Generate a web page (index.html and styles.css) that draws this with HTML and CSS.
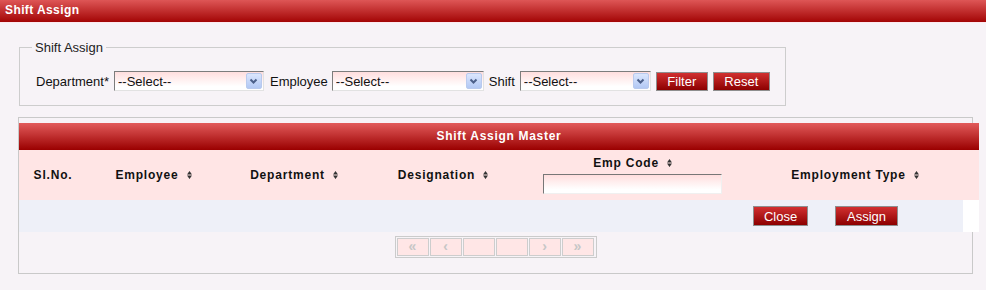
FILE: index.html
```html
<!DOCTYPE HTML>
<html>
<head>
<meta charset="UTF-8">
<title>Shift Assign</title>
<link rel="stylesheet" href="styles.css">
</head>
<body>
<div class="topbar">Shift Assign</div>

<fieldset class="filters">
    <legend>Shift Assign</legend>
    <div class="filter-row">
        <label>Department*</label>
        <span class="dropdown dd-dept"><select><option>--Select--</option></select><span class="drop-btn"><svg width="9" height="7" viewBox="0 0 9 7"><path d="M1.5 1.5 L4.5 4.5 L7.5 1.5" fill="none" stroke="#4b5f8a" stroke-width="2"/></svg></span></span>
        <label class="gap-l">Employee</label>
        <span class="dropdown dd-emp"><select><option>--Select--</option></select><span class="drop-btn"><svg width="9" height="7" viewBox="0 0 9 7"><path d="M1.5 1.5 L4.5 4.5 L7.5 1.5" fill="none" stroke="#4b5f8a" stroke-width="2"/></svg></span></span>
        <label>Shift</label>
        <span class="dropdown dd-shift"><select><option>--Select--</option></select><span class="drop-btn"><svg width="9" height="7" viewBox="0 0 9 7"><path d="M1.5 1.5 L4.5 4.5 L7.5 1.5" fill="none" stroke="#4b5f8a" stroke-width="2"/></svg></span></span>
        <button class="btn btn-filter">Filter</button>
        <button class="btn btn-reset">Reset</button>
    </div>
</fieldset>

<div class="master">
    <div class="grid">
        <div class="caption">Shift Assign Master</div>

        <div class="th">Sl.No.</div>
        <div class="th">Employee<svg class="sort" width="5" height="8" viewBox="0 0 5 8"><path d="M0 3.4 L2.5 0 L5 3.4 Z M0 4.6 L5 4.6 L2.5 8 Z" fill="#333"/></svg></div>
        <div class="th">Department<svg class="sort" width="5" height="8" viewBox="0 0 5 8"><path d="M0 3.4 L2.5 0 L5 3.4 Z M0 4.6 L5 4.6 L2.5 8 Z" fill="#333"/></svg></div>
        <div class="th">Designation<svg class="sort" width="5" height="8" viewBox="0 0 5 8"><path d="M0 3.4 L2.5 0 L5 3.4 Z M0 4.6 L5 4.6 L2.5 8 Z" fill="#333"/></svg></div>
        <div class="th th-code">
            <div>Emp Code<svg class="sort" width="5" height="8" viewBox="0 0 5 8"><path d="M0 3.4 L2.5 0 L5 3.4 Z M0 4.6 L5 4.6 L2.5 8 Z" fill="#333"/></svg></div>
            <input type="text" class="code-input">
        </div>
        <div class="th">Employment Type<svg class="sort" width="5" height="8" viewBox="0 0 5 8"><path d="M0 3.4 L2.5 0 L5 3.4 Z M0 4.6 L5 4.6 L2.5 8 Z" fill="#333"/></svg></div>
        <div class="th"></div>

        <div class="td"></div>
        <div class="td"></div>
        <div class="td"></div>
        <div class="td"></div>
        <div class="td"></div>
        <div class="td td-actions">
            <button class="btn btn-close">Close</button>
            <button class="btn btn-assign">Assign</button>
        </div>
        <div class="td td-blank"></div>
    </div>

    <div class="pager">
        <span class="pg">&laquo;</span>
        <span class="pg">&lsaquo;</span>
        <span class="pg"></span>
        <span class="pg"></span>
        <span class="pg">&rsaquo;</span>
        <span class="pg">&raquo;</span>
    </div>
</div>
</body>
</html>
```

FILE: styles.css
```css
*{margin: 0;padding: 0;box-sizing: border-box;}
body{background: #f7f3f7;font: 13px "Liberation Sans", Arial, sans-serif;color: #111;width: 986px;height: 290px;overflow: hidden;}

.topbar{height: 23px;line-height: 21px;padding-left: 5px;color: #fff;font-weight: bold;font-size: 12px;letter-spacing: 0.4px;background: linear-gradient(#de5656, #a30505);border-bottom: 1px solid #fde9ef;}

.filters{margin: 17px 0 0 19px;width: 767px;border: 1px solid #cdcdcd;padding: 16px 0 14px 16px;min-width: 0;}
.filters legend{padding: 0 3px;margin-left: -4px;line-height: 15px;color: #222;}
.filter-row{display: flex;align-items: center;height: 20px;gap: 5px;}
.filter-row .gap-l{margin-left: 1px;}

.dropdown{display: inline-flex;align-items: center;height: 20px;border: 1px solid;border-color: #7c7c7c #e2e2e2 #e2e2e2 #7c7c7c;background: linear-gradient(#ffdede, #fff 80%);}
.dd-dept{width: 150px;}
.dd-emp{width: 152px;margin-left: -1px;}
.dd-shift{width: 131px;}
.dropdown select{appearance: none;-webkit-appearance: none;border: 0;background: transparent;font: inherit;color: #111;flex: 1;min-width: 0;height: 100%;padding-left: 3px;outline: none;}
.drop-btn{width: 16px;height: 16px;margin-right: 1px;display: flex;align-items: center;justify-content: center;background: linear-gradient(#dbe6fd, #b2c8f4);border: 1px solid #b9caee;border-radius: 2px;}

.btn{height: 19px;border: 1px solid #8e8e8e;background: linear-gradient(#d13030, #8c0000);color: #fff;font: 13px "Liberation Sans", Arial, sans-serif;line-height: 17px;}
.btn-filter{width: 52px;}
.btn-reset{width: 57px;}

.master{margin: 11px 0 0 18px;width: 955px;height: 157px;border: 1px solid #c9c9c9;padding-top: 5px;}
.grid{display: grid;width: 960px;grid-template-columns: 68px 133px 148px 150px 229px 216px 16px;}
.caption{grid-column: 1 / -1;height: 27px;line-height: 27px;text-align: center;color: #fff;font-weight: bold;font-size: 12px;letter-spacing: 0.7px;background: linear-gradient(#e25b5b, #9a0000);}

.th{height: 50px;background: #ffe5e5;display: flex;align-items: center;justify-content: center;font-weight: bold;font-size: 12px;letter-spacing: 0.8px;color: #111;}
.th .sort{margin-left: 8px;}
.th-code{flex-direction: column;justify-content: flex-start;padding-top: 6px;gap: 3px;}
.th-code div{line-height: 15px;}
.code-input{width: 179px;height: 20px;border: 1px solid;border-color: #777 #f0f0f0 #f0f0f0 #777;background: linear-gradient(#ffdede, #fff 80%);outline: none;}

.td{height: 32px;background: #eef0f8;}
.td-blank{background: #fff;}
.td-actions{display: flex;align-items: center;padding-left: 6px;gap: 27px;}
.btn-close{width: 55px;height: 20px;}
.btn-assign{width: 63px;height: 20px;}

.pager{display: flex;gap: 1px;width: 202px;height: 22px;margin: 4px auto 0;padding: 1px;border: 1px solid #cbcbcb;}
.pg{width: 32px;height: 18px;background: #ffe6e6;border: 1px solid #cdcdcd;color: #c6c6c6;font-weight: bold;font-size: 14px;line-height: 15px;text-align: center;}
```
